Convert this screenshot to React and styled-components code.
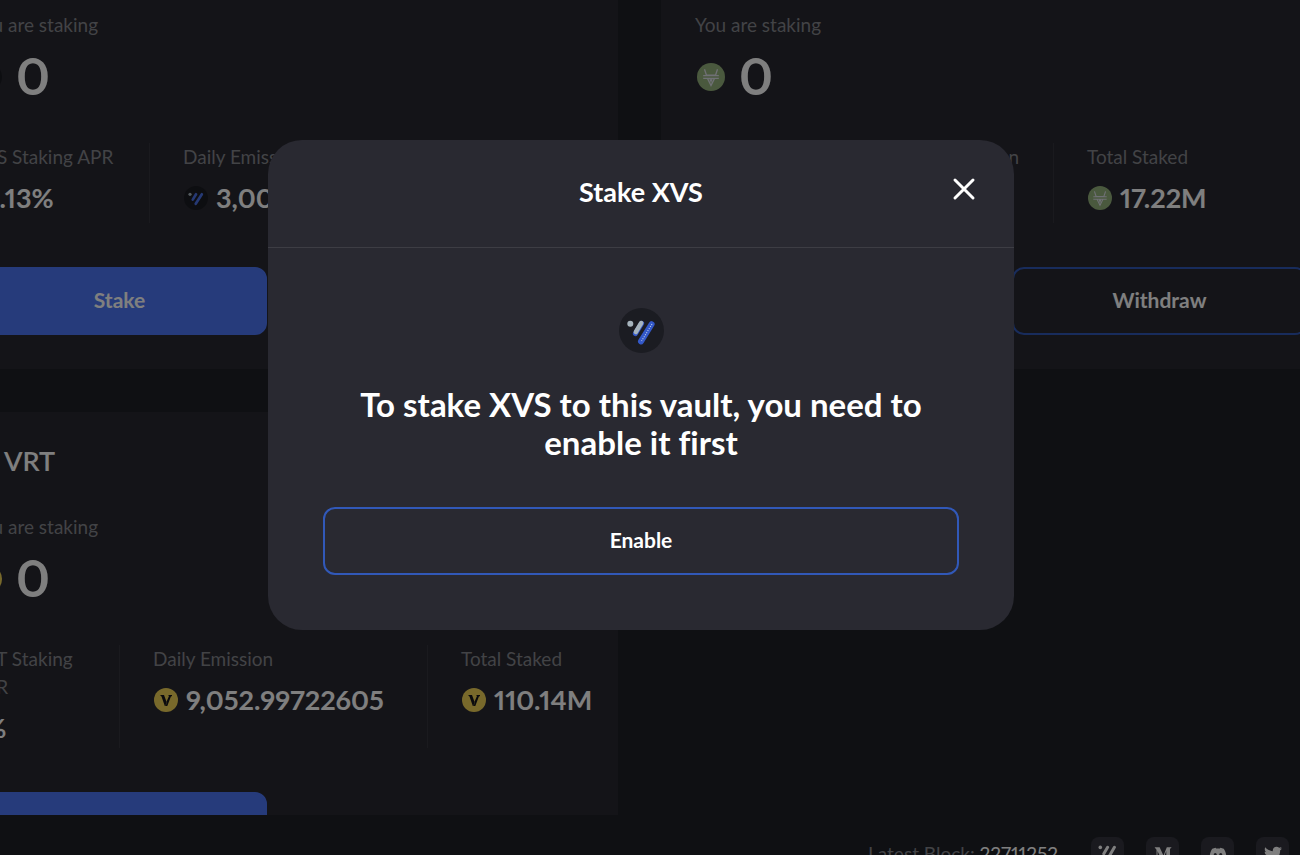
import React from "react";
import styled, { createGlobalStyle } from "styled-components";
import { FaDiscord, FaMediumM, FaTwitter } from "react-icons/fa";

const GlobalStyle = createGlobalStyle`
  * { box-sizing: border-box; }
  body {
    margin: 0;
    background: #1e2027;
    color: #fff;
    font-family: Lato, "Liberation Sans", sans-serif;
    font-variant-numeric: proportional-nums;
    font-variant-ligatures: none;
  }
  h1, h2, p, dl, dt, dd { margin: 0; }
  button { font-family: inherit; cursor: pointer; }
`;

const Page = styled.div`
  display: flex;
  flex-direction: column;
  height: 100vh;
  overflow: hidden;
`;

const Content = styled.main`
  flex: 1;
  min-height: 0;
  overflow: hidden;
`;

const VaultGrid = styled.div`
  display: grid;
  grid-template-columns: repeat(2, minmax(0, 1fr));
  align-items: start;
  gap: 43px;
  margin: -90px -41px 0 -62px;
`;

const Card = styled.section`
  padding: 34px;
  border-radius: 20px;
  background: #282830;
`;

const CardTitle = styled.h2`
  display: flex;
  align-items: center;
  gap: 8px;
  height: 32px;
  padding-bottom: 4px;
  margin-bottom: 35px;
  font-size: 27px;
  font-weight: 600;
`;

const Label = styled.p`
  color: #85868c;
  font-size: 19px;
  line-height: 28px;
`;

const Amount = styled.p`
  display: flex;
  align-items: center;
  gap: 14px;
  height: 72px;
  padding-left: 2px;
  margin-bottom: 32px;
  font-size: 51px;
  font-weight: 700;
  svg { margin-top: 4px; }
`;

const Stats = styled.dl`
  display: grid;
  grid-template-columns: ${(p) => p.$columns};
  min-height: 80px;
  margin-bottom: 44px;
`;

const Stat = styled.div`
  padding-left: 33px;
  border-left: 1px solid #34353c;
  &:first-child {
    padding-left: 0;
    padding-right: 30px;
    border-left: 0;
  }
`;

const StatValue = styled.dd`
  display: flex;
  align-items: center;
  gap: 8px;
  height: 37px;
  margin: 8px 0 2px;
  padding-left: 1px;
  font-size: 27px;
  font-weight: 700;
  white-space: nowrap;
`;

const Actions = styled.div`
  display: grid;
  grid-template-columns: 1fr 1fr;
  gap: 22px;
`;

const Button = styled.button`
  width: 100%;
  height: 68px;
  padding: 0 0 4px;
  border: 2px solid ${(p) => (p.$filled ? "#4c76f6" : "#3158b8")};
  border-radius: 12px;
  background: ${(p) => (p.$filled ? "#4c76f6" : "transparent")};
  color: #fff;
  font-size: 21px;
  font-weight: 700;
`;

const Footer = styled.footer`
  display: flex;
  flex: 0 0 40px;
  align-items: flex-start;
  justify-content: flex-end;
  padding: 22px 11px 0 0;
  overflow: hidden;
`;

const Block = styled.p`
  margin-right: 33px;
  color: #85868c;
  font-size: 19px;
  line-height: 33px;
  span { color: #fff; }
`;

const Socials = styled.nav`
  display: flex;
  gap: 22px;
`;

const SocialLink = styled.a`
  display: flex;
  align-items: center;
  justify-content: center;
  width: 33px;
  height: 33px;
  border-radius: 8px;
  background: #34343e;
  color: #fff;
  font-size: 18px;
`;

const Backdrop = styled.div`
  position: fixed;
  inset: 0;
  display: flex;
  align-items: center;
  justify-content: center;
  padding: 0 18px 85px 0;
  background: rgba(0, 0, 0, 0.5);
`;

const Dialog = styled.div`
  width: 746px;
  max-width: 100%;
  border-radius: 34px;
  background: #292931;
`;

const DialogHeader = styled.header`
  display: grid;
  grid-template-columns: 1fr auto 1fr;
  align-items: center;
  height: 108px;
  padding: 0 38px 4px;
  border-bottom: 1px solid #3d3d44;
`;

const DialogTitle = styled.h1`
  grid-column: 2;
  font-size: 27px;
  font-weight: 700;
`;

const CloseButton = styled.button`
  display: flex;
  justify-self: end;
  padding: 0 0 6px;
  border: 0;
  background: none;
  color: #fff;
`;

const DialogBody = styled.div`
  display: flex;
  flex-direction: column;
  align-items: center;
  gap: 32px;
  padding: 60px 55px 55px;
`;

const Message = styled.p`
  max-width: 600px;
  margin-bottom: 14px;
  font-size: 33px;
  font-weight: 700;
  line-height: 38px;
  text-align: center;
`;

const XvsIcon = ({ size }) => (
  <svg width={size} height={size} viewBox="0 0 45 45" aria-hidden="true">
    <circle cx="22.5" cy="22.5" r="22.5" fill="#1b1c22" />
    <circle cx="11.3" cy="15.7" r="3" fill="#a6b4bd" />
    <path d="M22.6 15.5 16.4 25.6" stroke="#3358c8" strokeWidth="5" strokeLinecap="round" />
    <path d="M22.2 15 16.8 24" stroke="#a6b4bd" strokeWidth="4.4" strokeLinecap="round" />
    <path d="M32.6 16.2 22 33.4" stroke="#3358c8" strokeWidth="6" strokeLinecap="round" />
    <path d="M33 16 22.6 33" stroke="#b9cbe8" strokeWidth="1.1" strokeDasharray="1.1 1.3" />
  </svg>
);

const XvsSmallIcon = ({ size }) => (
  <svg width={size} height={size} viewBox="0 0 45 45" aria-hidden="true">
    <circle cx="22.5" cy="22.5" r="22.5" fill="#1b1c22" />
    <circle cx="11.3" cy="15.7" r="3" fill="#a6b4bd" />
    <path d="M22.6 15.5 16.4 25.6M33.5 15.5 22 33.4" stroke="#4a72e8" strokeWidth="5" strokeLinecap="round" />
  </svg>
);

const VaiIcon = ({ size }) => (
  <svg width={size} height={size} viewBox="0 0 28 28" fill="none" aria-hidden="true">
    <circle cx="14" cy="14" r="14" fill="#95b27c" />
    <path
      d="M7.5 6.2 9.4 12M20.5 6.2 18.6 12M10 12.2h8M6.2 12.6h15.6M6.2 15.4h15.6M10.6 15.6 14 22.5l3.4-6.9M13 16l1 2.4 1-2.4"
      stroke="#dfe0ea"
      strokeWidth="1.3"
    />
  </svg>
);

const VrtIcon = ({ size }) => (
  <svg width={size} height={size} viewBox="0 0 24 24" aria-hidden="true">
    <circle cx="12" cy="12" r="12" fill="#f0d257" />
    <path d="M6 7h4l2.3 6.2-.6 4.8h-.9L7.5 8.4zM14 7h4v1.2h-1L13.3 18h-1.4l.6-4.2L15 8z" fill="#15151a" />
  </svg>
);

const VenusMark = () => (
  <svg width="19" height="18" viewBox="0 0 19 18" aria-hidden="true">
    <circle cx="2.3" cy="2.4" r="1.8" fill="currentColor" />
    <path d="M9.6 2.3 5.8 8.8M16.4 2.3 9.4 14.4" stroke="currentColor" strokeWidth="3" strokeLinecap="round" />
  </svg>
);

const CloseIcon = () => (
  <svg width="24" height="24" viewBox="0 0 24 24" aria-hidden="true">
    <path d="m3 3 18 18M21 3 3 21" stroke="currentColor" strokeWidth="3" strokeLinecap="round" />
  </svg>
);

const icons = { XVS: XvsSmallIcon, VAI: VaiIcon, VRT: VrtIcon };

const vaults = [
  { token: "XVS", reward: "XVS", apr: "12.13%", emission: "3,000", total: "7.15M", columns: "177px 181px 1fr", canWithdraw: true },
  { token: "VAI", reward: "XVS", apr: "5.02%", emission: "240", total: "17.22M", columns: "170px 188px 1fr", canWithdraw: true },
  { token: "VRT", reward: "VRT", apr: "1%", emission: "9,052.99722605", total: "110.14M", columns: "147px 308px 1fr", canWithdraw: false },
];

function Vault({ token, reward, apr, emission, total, columns, canWithdraw }) {
  const Token = icons[token];
  const Reward = icons[reward];
  return (
    <Card>
      <CardTitle>
        <Token size={24} />
        {token}
      </CardTitle>
      <Label>You are staking</Label>
      <Amount>
        <Token size={28} />0
      </Amount>
      <Stats $columns={columns}>
        <Stat>
          <Label as="dt">{token} Staking APR</Label>
          <StatValue>{apr}</StatValue>
        </Stat>
        <Stat>
          <Label as="dt">Daily Emission</Label>
          <StatValue>
            <Reward size={24} />
            {emission}
          </StatValue>
        </Stat>
        <Stat>
          <Label as="dt">Total Staked</Label>
          <StatValue>
            <Token size={24} />
            {total}
          </StatValue>
        </Stat>
      </Stats>
      <Actions>
        <Button $filled>Stake</Button>
        {canWithdraw && <Button>Withdraw</Button>}
      </Actions>
    </Card>
  );
}

export default function App() {
  return (
    <>
      <GlobalStyle />
      <Page>
        <Content>
          <VaultGrid>
            {vaults.map((vault) => (
              <Vault key={vault.token} {...vault} />
            ))}
          </VaultGrid>
        </Content>
        <Footer>
          <Block>
            Latest Block: <span>22711252</span>
          </Block>
          <Socials aria-label="Social links">
            <SocialLink href="#venus" aria-label="Venus"><VenusMark /></SocialLink>
            <SocialLink href="#medium" aria-label="Medium"><FaMediumM /></SocialLink>
            <SocialLink href="#discord" aria-label="Discord"><FaDiscord /></SocialLink>
            <SocialLink href="#twitter" aria-label="Twitter"><FaTwitter /></SocialLink>
          </Socials>
        </Footer>
      </Page>
      <Backdrop>
        <Dialog role="dialog" aria-modal="true" aria-labelledby="dialog-title">
          <DialogHeader>
            <DialogTitle id="dialog-title">Stake XVS</DialogTitle>
            <CloseButton aria-label="Close"><CloseIcon /></CloseButton>
          </DialogHeader>
          <DialogBody>
            <XvsIcon size={45} />
            <Message>To stake XVS to this vault, you need to enable it first</Message>
            <Button>Enable</Button>
          </DialogBody>
        </Dialog>
      </Backdrop>
    </>
  );
}
